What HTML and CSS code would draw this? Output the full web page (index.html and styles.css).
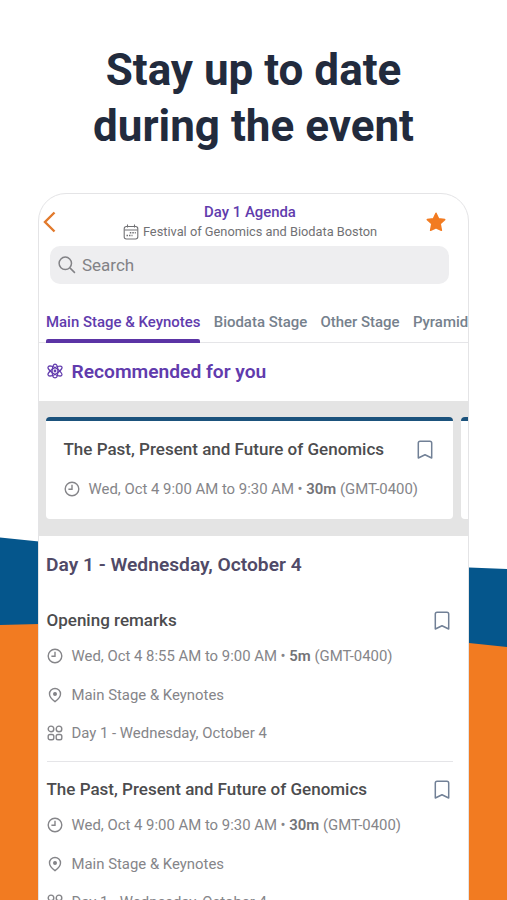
FILE: index.html
```html
<!DOCTYPE html>
<html lang="en">
<head>
<meta charset="utf-8">
<title>Day 1 Agenda</title>
<link rel="stylesheet" href="styles.css">
</head>
<body>
<svg width="0" height="0" class="defs" aria-hidden="true">
  <symbol id="clock" viewBox="0 0 16 16"><circle cx="8" cy="8" r="6.800"/><path d="M8 3.800v4.500H4.400"/></symbol>
  <symbol id="pin" viewBox="0 0 16 16"><path d="M8 14.600C5.200 12.600 2.500 10.400 2.500 7a5.500 5.500 0 0 1 11 0c0 3.400-2.700 5.600-5.500 7.600z"/><circle cx="8" cy="6.900" r="1.300" fill="currentColor"/></symbol>
  <symbol id="grid" viewBox="0 0 16 16"><circle cx="4" cy="3.900" r="2.800"/><circle cx="12" cy="3.900" r="2.800"/><rect x="1.200" y="9.500" width="5.600" height="5.200" rx="1.800"/><rect x="9.200" y="9.500" width="5.600" height="5.200" rx="1.800"/></symbol>
  <symbol id="bookmark" viewBox="0 0 16 20"><path d="M1.300 18V3q0-1.800 1.800-1.800h9.800q1.800 0 1.800 1.800v15L8 14.800z"/></symbol>
</svg>
<svg class="backdrop" viewBox="0 0 507 900" aria-hidden="true">
  <path class="blue" d="M0 537.500L39 541.500V630H0zM469 567.500L507 569V655H469z"/>
  <path class="orange" d="M0 625L39 624V900H0zM469 643L507 647V900H469z"/>
</svg>
<h1 class="hero">Stay up to date<br>during the event</h1>
<main class="phone">
  <header class="top">
    <svg class="back" viewBox="0 0 14 22"><path d="M11.500 1.500L2 11l9.500 9.500"/></svg>
    <div class="titles">
      <div class="title">Day 1 Agenda</div>
      <div class="subtitle"><svg class="cal" viewBox="0 0 16 16"><rect x="1.200" y="2.500" width="13.600" height="12.500" rx="2.200"/><path d="M1.500 6h13M4.500 .6v3M11.500 .6v3"/><path class="dots" d="M6.800 8.800h6M3.500 11.500h6"/></svg><span>Festival of Genomics and Biodata Boston</span></div>
    </div>
    <svg class="star" viewBox="0 0 22 22"><path d="M11 2.200l2.600 5.600 6.100.8-4.500 4.200 1.200 6.500L11 16.700l-5.400 2.600 1.200-6.500-4.500-4.200 6.100-.8z"/></svg>
  </header>
  <div class="search"><svg viewBox="0 0 18 18"><circle cx="7.300" cy="7.300" r="6.200"/><path d="M11.900 11.900l5 5"/></svg><span>Search</span></div>
  <nav class="tabs">
    <span class="tab active">Main Stage &amp; Keynotes</span><span class="tab">Biodata Stage</span><span class="tab">Other Stage</span><span class="tab">Pyramid</span>
  </nav>
  <h2 class="recommended"><svg viewBox="0 0 16 16"><ellipse cx="8" cy="8" rx="2.900" ry="6.900"/><ellipse cx="8" cy="8" rx="2.900" ry="8" transform="rotate(58 8 8)"/><ellipse cx="8" cy="8" rx="2.900" ry="8" transform="rotate(122 8 8)"/><circle cx="8" cy="8" r=".8"/></svg><span>Recommended for you</span></h2>
  <section class="carousel">
    <article class="card">
      <div class="row head"><h3>The Past, Present and Future of Genomics</h3><svg class="mark"><use href="#bookmark"/></svg></div>
      <div class="row meta"><svg><use href="#clock"/></svg><span>Wed, Oct 4 9:00 AM to 9:30 AM • <b>30m</b> (GMT-0400)</span></div>
    </article>
    <article class="card"></article>
  </section>
  <h2 class="day">Day 1 - Wednesday, October 4</h2>
  <section class="list">
    <article class="item">
      <div class="row head"><h3>Opening remarks</h3><svg class="mark"><use href="#bookmark"/></svg></div>
      <div class="row meta"><svg><use href="#clock"/></svg><span>Wed, Oct 4 8:55 AM to 9:00 AM • <b>5m</b> (GMT-0400)</span></div>
      <div class="row meta"><svg><use href="#pin"/></svg><span>Main Stage &amp; Keynotes</span></div>
      <div class="row meta"><svg><use href="#grid"/></svg><span>Day 1 - Wednesday, October 4</span></div>
    </article>
    <article class="item">
      <div class="row head"><h3>The Past, Present and Future of Genomics</h3><svg class="mark"><use href="#bookmark"/></svg></div>
      <div class="row meta"><svg><use href="#clock"/></svg><span>Wed, Oct 4 9:00 AM to 9:30 AM • <b>30m</b> (GMT-0400)</span></div>
      <div class="row meta"><svg><use href="#pin"/></svg><span>Main Stage &amp; Keynotes</span></div>
      <div class="row meta"><svg><use href="#grid"/></svg><span>Day 1 - Wednesday, October 4</span></div>
    </article>
  </section>
</main>
</body>
</html>
```
FILE: styles.css
```css
* { box-sizing: border-box; margin: 0; padding: 0; }
body { width: 507px; height: 900px; overflow: hidden; position: relative; background: #fff; font-family: Roboto, sans-serif; white-space: nowrap; }
svg { fill: none; stroke: currentColor; flex: none; display: block; }
.defs { position: absolute; }
.backdrop { position: absolute; left: 0; top: 0; width: 507px; height: 900px; z-index: -1; stroke: none; }
.blue { fill: #05568c; }
.orange { fill: #f27b21; }
.hero { height: 193px; padding-top: 42px; text-align: center; font-size: 44px; line-height: 56px; font-weight: 700; color: #222b3d; }
.phone { margin-left: 38px; width: 431px; height: 740px; border: 1px solid #e4e4e6; border-radius: 28px 28px 0 0; background: #fff; overflow: hidden; }
.top { display: flex; height: 52px; padding: 8px 21px 0 3px; align-items: flex-start; }
.back { width: 14px; height: 22px; margin: 9px 0 0 1px; color: #e27a2c; stroke-width: 2.4; }
.titles { flex: 1; margin-left: 18px; display: flex; flex-direction: column; align-items: center; }
.title { font-size: 14.900px; line-height: 20px; font-weight: 500; color: #613bad; }
.subtitle { display: flex; align-items: center; gap: 4px; font-size: 12.800px; line-height: 20px; color: #717174; }
.cal { width: 16px; height: 16px; stroke-width: 1.1; }
.dots { stroke-dasharray: 1.500 1; stroke-width: 1.500; }
.star { width: 22px; height: 22px; margin-top: 9px; color: #f27b21; fill: #f27b21; stroke-width: 1.500; stroke-linejoin: round; }
.search { margin: 0 0 0 11px; width: 399px; height: 38px; border-radius: 10px; background: #eeeef0; display: flex; align-items: center; padding-left: 8px; gap: 6px; font-size: 17px; color: #828286; }
.search svg { width: 18px; height: 18px; stroke-width: 1.500; }
.tabs { display: flex; gap: 13.300px; margin-top: 17px; height: 42px; padding-left: 7px; border-bottom: 1px solid #e5e5e8; font-size: 14.950px; line-height: 43px; font-weight: 500; color: #76818d; }
.tab { flex: none; height: 42px; }
.tab.active { color: #613bad; }
.tab.active::after { content: ""; display: block; margin-top: -5px; height: 4px; background: #5b34a5; border-radius: 2px 2px 0 0; }
.recommended { display: flex; align-items: center; gap: 9px; height: 58px; padding: 0 0 2px 7.500px; font-size: 19.200px; font-weight: 600; color: #613bad; }
.recommended svg { width: 16px; height: 16px; stroke-width: 1.2; }
.carousel { display: flex; gap: 8px; height: 135px; padding: 16px 0 17px 7px; background: #e4e4e4; overflow: hidden; }
.card { flex: none; width: 407px; background: #fff; border-top: 4px solid #1b527c; border-radius: 4px; padding: 15px 20px 0 17.500px; }
.row { display: flex; align-items: center; }
.head { height: 26px; justify-content: space-between; }
h3 { font-size: 17.030px; font-weight: 500; color: #4c4c4e; }
.mark { width: 16px; height: 20px; margin-top: 1px; color: #718096; stroke-width: 1.500; stroke-linejoin: round; }
.meta { gap: 9px; font-size: 14.900px; color: #858589; }
.meta svg { width: 16px; height: 16px; stroke-width: 1.400; }
.meta b { font-weight: 600; color: #737377; }
.card .meta { margin-top: 18px; height: 18px; }
.day { height: 57px; line-height: 58px; padding-left: 7px; font-size: 19.200px; font-weight: 600; color: #504a67; }
.list { padding: 0 15px 0 7.500px; }
.item { height: 169px; padding-top: 14px; border-bottom: 1px solid #e5e5e8; }
.item .head { padding-right: 3px; }
.item .meta { height: 38.400px; }
.item .head + .meta { margin-top: 4px; }
```
